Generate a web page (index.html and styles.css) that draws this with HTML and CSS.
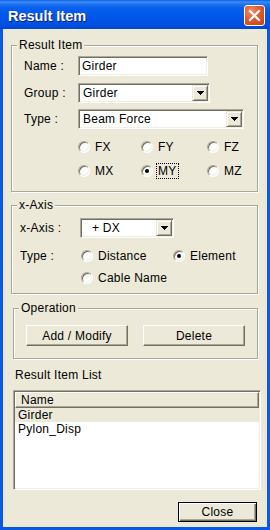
FILE: index.html
```html
<!DOCTYPE html>
<html lang="en">
<head>
    <meta charset="UTF-8">
    <meta name="viewport" content="width=device-width, initial-scale=1.0">
    <title>Result Item</title>
    <link rel="stylesheet" href="styles.css">
</head>
<body>
    <div class="window">
        <div class="titlebar">
            <span class="title">Result Item</span>
            <span class="close-x">
                <svg width="19" height="19" viewBox="0 0 19 19">
                    <path d="M5 5 L14 14 M14 5 L5 14" stroke="#fff" stroke-width="2.2" stroke-linecap="square"/>
                </svg>
            </span>
        </div>
        <div class="client">
            <div class="group group-item">
                <div class="group-title">Result Item</div>
                <div class="field first">
                    <span class="label">Name :</span>
                    <div class="textbox name-box">Girder</div>
                </div>
                <div class="field">
                    <span class="label">Group :</span>
                    <div class="combo group-combo">
                        <span class="combo-text">Girder</span>
                        <span class="combo-btn"><svg width="7" height="4"><rect x="0" y="0" width="7" height="1"/><rect x="1" y="1" width="5" height="1"/><rect x="2" y="2" width="3" height="1"/><rect x="3" y="3" width="1" height="1"/></svg></span>
                    </div>
                </div>
                <div class="field type-field">
                    <span class="label">Type :</span>
                    <div class="combo type-combo">
                        <span class="combo-text">Beam Force</span>
                        <span class="combo-btn"><svg width="7" height="4"><rect x="0" y="0" width="7" height="1"/><rect x="1" y="1" width="5" height="1"/><rect x="2" y="2" width="3" height="1"/><rect x="3" y="3" width="1" height="1"/></svg></span>
                    </div>
                </div>
                <div class="radio-grid">
                    <div class="radio-item"><span class="radio"></span><span class="radio-text">FX</span></div>
                    <div class="radio-item"><span class="radio"></span><span class="radio-text">FY</span></div>
                    <div class="radio-item"><span class="radio"></span><span class="radio-text">FZ</span></div>
                    <div class="radio-item"><span class="radio"></span><span class="radio-text">MX</span></div>
                    <div class="radio-item"><span class="radio on"></span><span class="radio-text focus">MY</span></div>
                    <div class="radio-item"><span class="radio"></span><span class="radio-text">MZ</span></div>
                </div>
            </div>

            <div class="group group-axis">
                <div class="group-title">x-Axis</div>
                <div class="field first">
                    <span class="label axis-label">x-Axis :</span>
                    <div class="combo axis-combo">
                        <span class="combo-text indent">+ DX</span>
                        <span class="combo-btn"><svg width="7" height="4"><rect x="0" y="0" width="7" height="1"/><rect x="1" y="1" width="5" height="1"/><rect x="2" y="2" width="3" height="1"/><rect x="3" y="3" width="1" height="1"/></svg></span>
                    </div>
                </div>
                <div class="axis-row">
                    <span class="label axis-type">Type :</span>
                    <div class="radio-item distance"><span class="radio"></span><span class="radio-text">Distance</span></div>
                    <div class="radio-item"><span class="radio on"></span><span class="radio-text">Element</span></div>
                </div>
                <div class="axis-row cable-row">
                    <div class="radio-item"><span class="radio"></span><span class="radio-text">Cable Name</span></div>
                </div>
            </div>

            <div class="group group-op">
                <div class="group-title">Operation</div>
                <div class="op-buttons">
                    <div class="btn">Add / Modify</div>
                    <div class="btn">Delete</div>
                </div>
            </div>

            <div class="list-label">Result Item List</div>
            <div class="listbox">
                <div class="list-header">Name</div>
                <div class="list-row selected">Girder</div>
                <div class="list-row">Pylon_Disp</div>
            </div>

            <div class="btn btn-default close-btn">Close</div>
        </div>
    </div>
</body>
</html>
```

FILE: styles.css
```css
body {
    margin: 0;
    font-family: "Liberation Sans", Arial, sans-serif;
    font-size: 12px;
    letter-spacing: 0.25px;
    color: #000;
    background: #fff;
}
.window {
    width: 270px;
    height: 530px;
    display: flex;
    flex-direction: column;
    background: #0a58e6;
}
.titlebar {
    height: 29px;
    box-sizing: border-box;
    padding: 2px 5px 0 8px;
    display: flex;
    align-items: center;
    background: linear-gradient(to bottom, #0a5fea 0, #3d8df5 2px, #2273f2 4px, #0860ee 8px, #0056e8 60%, #0050e0 85%, #0046d4 100%);
}
.title {
    color: #fff;
    font-weight: bold;
    font-size: 14.5px;
    letter-spacing: 0;
    text-shadow: 1px 1px #0f1c8a;
}
.close-x {
    margin-left: auto;
    width: 21px;
    height: 21px;
    box-sizing: border-box;
    border: 1px solid #fff;
    border-radius: 3px;
    background: radial-gradient(circle at 35% 30%, #f29170 0, #e05a30 45%, #c93d14 100%);
    display: flex;
}
.client {
    flex: 1;
    margin: 0 3px 3px;
    background: #ece9d8;
    overflow: hidden;
}

/* group boxes */
.group {
    box-sizing: border-box;
    border: 1px solid #aca899;
    box-shadow: inset 1px 1px #fff, 1px 1px #fff;
}
.group-title {
    width: fit-content;
    margin: -8px 0 0 5px;
    padding: 0 2px;
    line-height: 15px;
    background: #ece9d8;
}
.group-item {
    margin: 16px 0 0 8px;
    width: 247px;
    padding-bottom: 12px;
}
.group-axis {
    margin: 13px 0 0 8px;
    width: 247px;
    padding-bottom: 7px;
}
.group-op {
    margin: 14px 0 0 10px;
    width: 245px;
    padding-bottom: 12px;
}

/* label + control rows */
.field {
    display: flex;
    align-items: center;
    margin-top: 7px;
    padding-left: 12px;
}
.field.first {
    margin-top: 3px;
}
.field.type-field {
    margin-top: 6px;
}
.group-axis .field.first {
    margin-top: 5px;
    padding-left: 8px;
}
.label {
    width: 54px;
    flex: none;
}
.axis-label {
    width: 60px;
}
.textbox,
.combo {
    box-sizing: border-box;
    height: 20px;
    background: #fff;
    border: 1px solid;
    border-color: #aca899 #fff #fff #aca899;
    box-shadow: inset 1px 1px #716f64, inset -1px -1px #f1efe2;
}
.textbox {
    padding: 1px 3px;
    line-height: 16px;
}
.name-box {
    width: 130px;
}
.combo {
    display: flex;
    align-items: center;
    padding: 1px;
}
.group-combo {
    width: 132px;
}
.type-combo {
    width: 166px;
}
.axis-combo {
    width: 94px;
}
.combo-text {
    flex: 1;
    padding-left: 3px;
}
.combo-text.indent {
    padding-left: 10px;
}
.combo-btn {
    width: 16px;
    height: 16px;
    box-sizing: border-box;
    background: #ece9d8;
    border: 1px solid;
    border-color: #ece9d8 #716f64 #716f64 #ece9d8;
    box-shadow: inset 1px 1px #fff, inset -1px -1px #aca899;
    display: flex;
    align-items: center;
    justify-content: center;
}

/* radios */
.radio-grid {
    display: grid;
    grid-template-columns: 63px 66px auto;
    grid-auto-rows: 16px;
    row-gap: 8px;
    margin-top: 10px;
    padding-left: 66px;
}
.radio-item {
    display: flex;
    align-items: center;
    height: 16px;
}
.radio {
    width: 12px;
    height: 12px;
    box-sizing: border-box;
    flex: none;
    border-radius: 50%;
    background: #fff;
    border: 1px solid;
    border-color: #aca899 #fff #fff #aca899;
    box-shadow: inset 1px 1px #716f64, inset -1px -1px #f1efe2;
    margin-right: 3px;
    display: flex;
    align-items: center;
    justify-content: center;
}
.radio.on::after {
    content: "";
    width: 4px;
    height: 4px;
    border-radius: 50%;
    background: #000;
}
.radio-text {
    border: 1px solid transparent;
    padding: 0 1px;
    line-height: 14px;
}
.radio-text.focus {
    border: 1px dotted #000;
}
.axis-row {
    display: flex;
    align-items: center;
    height: 16px;
    margin-top: 10px;
    padding-left: 8px;
}
.axis-type {
    width: 61px;
}
.distance {
    width: 92px;
}
.cable-row {
    margin-top: 6px;
    padding-left: 69px;
}

/* buttons */
.op-buttons {
    display: flex;
    gap: 15px;
    margin-top: 9px;
    padding-left: 12px;
}
.btn {
    box-sizing: border-box;
    width: 102px;
    height: 21px;
    background: #ece9d8;
    border: 1px solid;
    border-color: #fff #716f64 #716f64 #fff;
    box-shadow: inset -1px -1px #aca899;
    display: flex;
    align-items: center;
    justify-content: center;
}
.btn-default {
    border: 1px solid #000;
    box-shadow: inset 1px 1px #fff, inset -1px -1px #716f64, inset -2px -2px #aca899;
}
.close-btn {
    width: 79px;
    height: 20px;
    margin: 12px 0 0 175px;
}

/* list */
.list-label {
    margin: 9px 0 0 12px;
    line-height: 15px;
}
.listbox {
    box-sizing: border-box;
    width: 248px;
    height: 100px;
    margin: 7px 0 0 10px;
    background: #fff;
    border: 1px solid;
    border-color: #aca899 #fff #fff #aca899;
    box-shadow: inset 1px 1px #716f64, inset -1px -1px #f1efe2;
    padding: 1px;
}
.list-header {
    box-sizing: border-box;
    height: 16px;
    line-height: 14px;
    padding-left: 5px;
    background: #ece9d8;
    border: 1px solid;
    border-color: #fff #716f64 #716f64 #fff;
    box-shadow: inset -1px -1px #aca899;
}
.list-row {
    line-height: 14px;
    padding-left: 3px;
}
.list-row.selected {
    background: #ece9d8;
}
```
